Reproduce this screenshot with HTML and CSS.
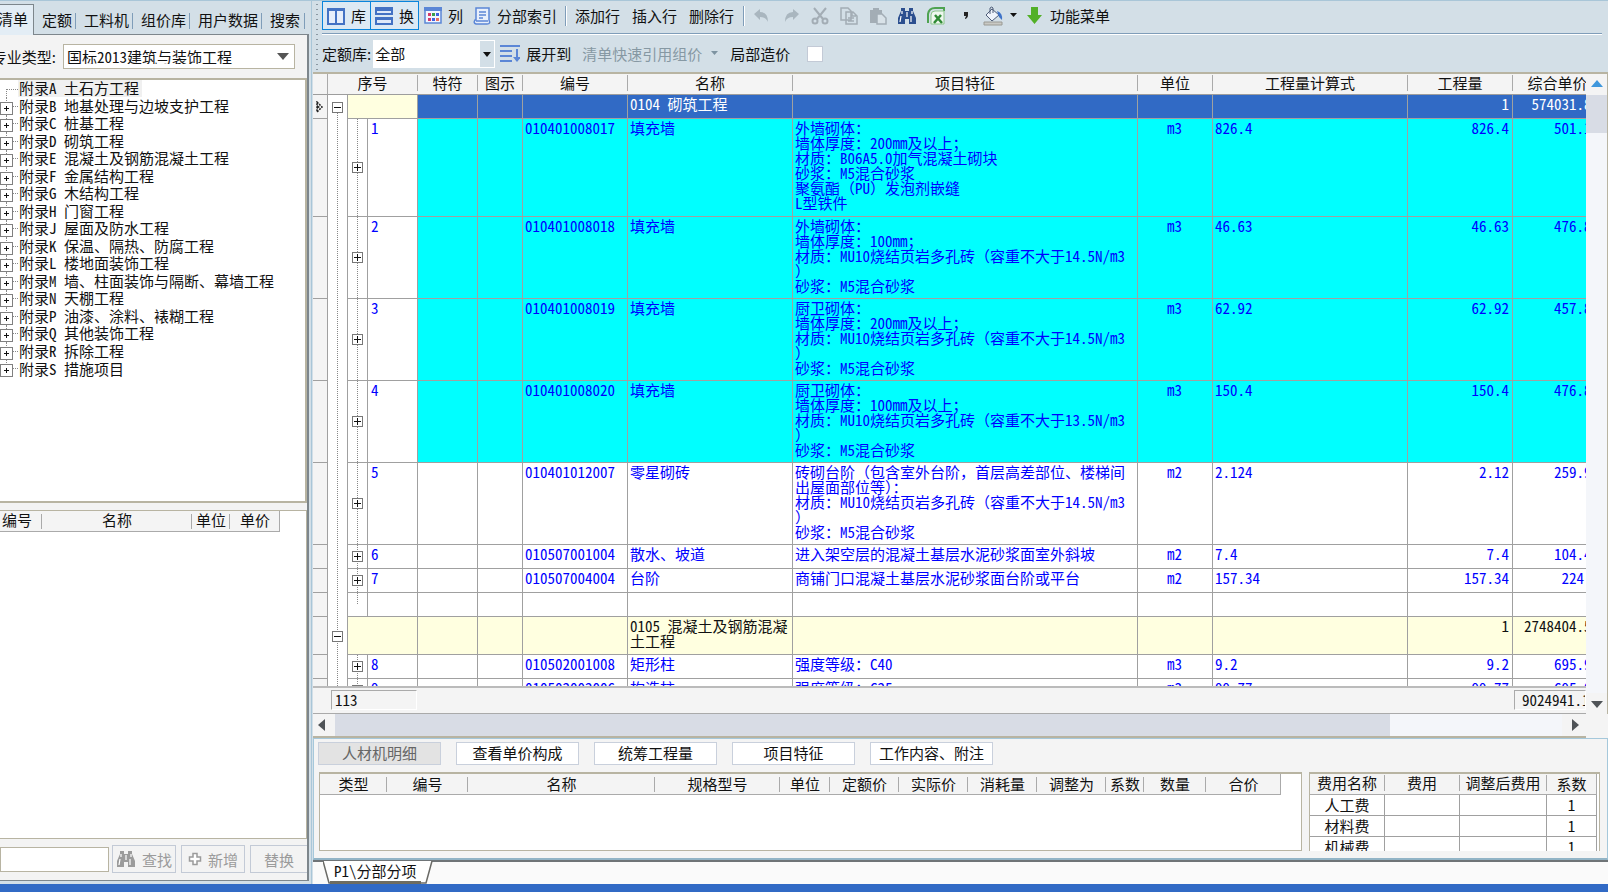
FILE: index.html
```html
<!DOCTYPE html>
<html lang="zh-CN">
<head>
<meta charset="utf-8">
<title>分部分项</title>
<link rel="stylesheet" href="styles.css">
</head>
<body>
<svg class="defs" aria-hidden="true">
  <symbol id="bino" viewBox="0 0 20 18"><path d="M4 1h4v3h4V1h4v3l3 7v6h-7v-5H8v5H1v-6l3-7z" fill="currentColor"/><path d="M5 4v3M15 4v3M4 9l-1 6M14 9v6M10 5v5" stroke="#fff" stroke-width="1.2" fill="none"/></symbol>
</svg>
<div class="app">
  <aside class="side">
    <nav class="tabs">
      <button class="tab on">清单</button><button class="tab">定额</button><button class="tab">工料机</button><button class="tab">组价库</button><button class="tab">用户数据</button><button class="tab">搜索</button>
    </nav>
    <div class="side-body">
      <div class="type">
        <label for="spec">专业类型:</label>
        <div class="pick"><select id="spec"><option>国标2013建筑与装饰工程</option></select></div>
      </div>
      <ul class="tree">
        <li class="leaf"><span class="sel">附录A 土石方工程</span></li>
        <li><span>附录B 地基处理与边坡支护工程</span></li>
        <li><span>附录C 桩基工程</span></li>
        <li><span>附录D 砌筑工程</span></li>
        <li><span>附录E 混凝土及钢筋混凝土工程</span></li>
        <li><span>附录F 金属结构工程</span></li>
        <li><span>附录G 木结构工程</span></li>
        <li><span>附录H 门窗工程</span></li>
        <li><span>附录J 屋面及防水工程</span></li>
        <li><span>附录K 保温、隔热、防腐工程</span></li>
        <li><span>附录L 楼地面装饰工程</span></li>
        <li><span>附录M 墙、柱面装饰与隔断、幕墙工程</span></li>
        <li><span>附录N 天棚工程</span></li>
        <li><span>附录P 油漆、涂料、裱糊工程</span></li>
        <li><span>附录Q 其他装饰工程</span></li>
        <li><span>附录R 拆除工程</span></li>
        <li><span>附录S 措施项目</span></li>
      </ul>
      <div class="list">
        <table class="head list-head"><tr><th class="w42">编号</th><th class="w150">名称</th><th class="w38">单位</th><th class="w50">单价</th></tr></table>
      </div>
      <div class="find">
        <input type="text" aria-label="查找内容">
        <button><svg width="20" height="18"><use href="#bino"/></svg>查找</button>
        <button><svg width="14" height="14" viewBox="0 0 14 14"><path d="M5 1.500h4v3.500h3.500v4H9v3.500H5V9H1.500V5H5z" fill="#fff" stroke="#9b9b9b" stroke-width="1.500"/></svg>新增</button>
        <button class="last">替换</button>
      </div>
    </div>
  </aside>

  <main class="main">
    <div class="bars">
      <div class="bar">
        <div class="pair">
          <button class="tog"><svg width="18" height="18" viewBox="0 0 18 18"><path d="M1 3h16v14H1zM9 3v14" fill="#e6eefb" stroke="#4472c4" stroke-width="2"/><path d="M0 1h18v3H0z" fill="#4472c4"/></svg>库</button><button class="tog"><svg width="18" height="18" viewBox="0 0 18 18"><path d="M1 1h16v6H1zM1 11h16v6H1z" fill="#dfe9f9" stroke="#4472c4" stroke-width="2"/><path d="M0 0h18v4H0zM0 10h18v3H0z" fill="#4472c4"/></svg>换</button>
        </div>
        <button class="tb"><svg width="18" height="18" viewBox="0 0 18 18"><path d="M1 1h16v15H1z" fill="#f2f6ff" stroke="#5b86d6" stroke-width="1.500"/><path d="M0 0h18v4H0z" fill="#5b86d6"/><path d="M4 6h3v3H4zM4 11h3v3H4z" fill="#d33a6c"/><path d="M8 6h3v3H8z" fill="#3a9d4a"/><path d="M12 6h3v3h-3zM8 11h3v3H8z" fill="#4060e0"/><path d="M12 11h3v3h-3z" fill="#e87060"/></svg>列</button>
        <button class="tb"><svg width="18" height="18" viewBox="0 0 18 18"><path d="M3 1h13v12q2 4-2 4H3q-3-1-1-4h1z" fill="#e8effb" stroke="#5b86d6" stroke-width="1.500"/><path d="M6 5h7M6 8h7M6 11h4M3 14h12" stroke="#5b86d6" stroke-width="1.500"/></svg>分部索引</button>
        <i class="sep"></i>
        <button class="tb txt">添加行</button><button class="tb txt">插入行</button><button class="tb txt">删除行</button>
        <i class="sep"></i>
        <button class="ic" aria-label="撤销"><svg width="18" height="18" viewBox="0 0 18 18"><path d="M1 7l6-5v3q8 0 8 10-2-5-8-5v3z" fill="#a9b6bf"/></svg></button>
        <button class="ic" aria-label="重做"><svg width="18" height="18" viewBox="0 0 18 18"><path d="M17 7l-6-5v3q-8 0-8 10 2-5 8-5v3z" fill="#a9b6bf"/></svg></button>
        <button class="ic" aria-label="剪切"><svg width="18" height="18" viewBox="0 0 18 18" fill="none" stroke="#a3adb5" stroke-width="2"><path d="M3 1l9 11M15 1L6 12"/><circle cx="4" cy="14" r="2.500"/><circle cx="14" cy="14" r="2.500"/></svg></button>
        <button class="ic" aria-label="复制"><svg width="18" height="18" viewBox="0 0 18 18" fill="#d3dfe7" stroke="#a3adb5" stroke-width="1.500"><path d="M1 1h7l3 3v9H1zM6 5h7l4 4v8H6zM12 5v4h4M8 11h6M8 14h6"/></svg></button>
        <button class="ic" aria-label="粘贴"><svg width="18" height="18" viewBox="0 0 18 18"><path d="M1 3h12v13H1zM4 1h6v3H4z" fill="#a3adb5"/><path d="M8 7h5l4 4v6H8z" fill="#d9e2e8" stroke="#a3adb5" stroke-width="1.500"/></svg></button>
        <button class="ic navy" aria-label="查找"><svg width="20" height="18"><use href="#bino"/></svg></button>
        <button class="ic" aria-label="导出表格"><svg width="18" height="18" viewBox="0 0 18 18"><path d="M1 16V7q1-6 7-6h9v3" fill="none" stroke="#4fa351" stroke-width="2"/><path d="M4 16V8q0-4 4-4h9v13H4z" fill="#eef7ee" stroke="#8cc58c"/><path d="M8 8l7 8M14 8l-7 8" stroke="#2f8a35" stroke-width="2.500"/></svg></button>
        <button class="ic" aria-label="千分位"><svg width="18" height="18" viewBox="0 0 18 18"><path d="M8 5h4v3q0 3-3 4v-1q1-1 1-2H8z" fill="#222"/></svg></button>
        <button class="ic fill" aria-label="填充颜色"><svg width="20" height="20" viewBox="0 0 20 20"><path d="M9 3l7 6-7 6-6-6z" fill="#eef3fb" stroke="#4f5d78"/><path d="M7 8V2q2-2 3 0v5" fill="none" stroke="#4f5d78"/><path d="M14 5q6 2 5 9l-3-3z" fill="#3f73c8"/><path d="M1 16h18v3H1z" fill="#c9c9c4" stroke="#9a9a94"/></svg><svg width="8" height="5" viewBox="0 0 8 5"><path d="M0 0h7L3.500 4z" fill="#111"/></svg></button>
        <button class="tb menu"><svg width="15" height="17" viewBox="0 0 15 17"><path d="M4 0h7v8h4l-7.500 9L0 8h4z" fill="#52b027"/></svg>功能菜单</button>
      </div>
      <div class="bar two">
        <label for="lib">定额库:</label>
        <div class="pick lib"><select id="lib"><option>全部</option></select></div>
        <button class="tb exp"><svg width="20" height="19" viewBox="0 0 20 19"><path d="M0 2h20M0 7h12M0 12h12M0 17h12M17 5v11" stroke="#5b86d6" stroke-width="2" fill="none"/><path d="M13 13l4 5 4-5z" fill="#5b86d6"/></svg>展开到</button>
        <button class="tb dim">清单快速引用组价<svg width="8" height="5" viewBox="0 0 8 5"><path d="M0 0h7L3.500 4z" fill="#7d93a1"/></svg></button>
        <label class="part" for="part">局部造价</label><input id="part" class="chk" type="checkbox">
      </div>
    </div>

    <section class="sheet">
      <div class="view">
        <div class="rows">
        <table class="grid">
          <colgroup><col class="c15"><col class="c20"><col class="c20"><col class="c50"><col class="c60"><col class="c45"><col class="c105"><col class="c165"><col><col class="c75"><col class="c195"><col class="c105"><col class="c90"></colgroup>
          <thead><tr><th></th><th colspan="3"><span>序号</span></th><th><span>特符</span></th><th><span>图示</span></th><th><span>编号</span></th><th><span>名称</span></th><th><span>项目特征</span></th><th><span>单位</span></th><th><span>工程量计算式</span></th><th><span>工程量</span></th><th><span>综合单价</span></th></tr></thead>
          <tbody>
          <tr class="h24 cur"><td class="ind"><svg width="8" height="12" viewBox="0 0 8 12"><path d="M1 1l5 5-5 5z" fill="#fff" stroke="#222" stroke-width="1.500" stroke-dasharray="2 1"/><path d="M1 4l3 2-3 2z" fill="#222"/></svg></td><td class="t root first"><button class="box minus" aria-label="折叠"></button></td><td colspan="2" class="cream"></td><td></td><td></td><td></td><td>0104 砌筑工程</td><td></td><td></td><td></td><td class="r">1</td><td class="r">574031.82</td></tr>
          <tr class="h98 cy"><td class="ind"></td><td class="t"></td><td class="t"><button class="box" aria-label="展开"></button></td><td class="no">1</td><td></td><td></td><td>010401008017</td><td>填充墙</td><td>外墙砌体：<br>墙体厚度：200mm及以上；<br>材质：B06A5.0加气混凝土砌块<br>砂浆：M5混合砂浆<br>聚氨酯（PU）发泡剂嵌缝<br>L型铁件</td><td class="c">m3</td><td>826.4</td><td class="r">826.4</td><td class="r">501.10</td></tr>
          <tr class="h82 cy"><td class="ind"></td><td class="t"></td><td class="t"><button class="box" aria-label="展开"></button></td><td class="no">2</td><td></td><td></td><td>010401008018</td><td>填充墙</td><td>外墙砌体：<br>墙体厚度：100mm；<br>材质：MU10烧结页岩多孔砖（容重不大于14.5N/m3<br>）<br>砂浆：M5混合砂浆</td><td class="c">m3</td><td>46.63</td><td class="r">46.63</td><td class="r">476.82</td></tr>
          <tr class="h82 cy"><td class="ind"></td><td class="t"></td><td class="t"><button class="box" aria-label="展开"></button></td><td class="no">3</td><td></td><td></td><td>010401008019</td><td>填充墙</td><td>厨卫砌体：<br>墙体厚度：200mm及以上；<br>材质：MU10烧结页岩多孔砖（容重不大于14.5N/m3<br>）<br>砂浆：M5混合砂浆</td><td class="c">m3</td><td>62.92</td><td class="r">62.92</td><td class="r">457.82</td></tr>
          <tr class="h82 cy"><td class="ind"></td><td class="t"></td><td class="t"><button class="box" aria-label="展开"></button></td><td class="no">4</td><td></td><td></td><td>010401008020</td><td>填充墙</td><td>厨卫砌体：<br>墙体厚度：100mm及以上；<br>材质：MU10烧结页岩多孔砖（容重不大于13.5N/m3<br>）<br>砂浆：M5混合砂浆</td><td class="c">m3</td><td>150.4</td><td class="r">150.4</td><td class="r">476.82</td></tr>
          <tr class="h82"><td class="ind"></td><td class="t"></td><td class="t"><button class="box" aria-label="展开"></button></td><td class="no">5</td><td></td><td></td><td>010401012007</td><td>零星砌砖</td><td>砖砌台阶（包含室外台阶，首层高差部位、楼梯间<br>出屋面部位等）：<br>材质：MU10烧结页岩多孔砖（容重不大于14.5N/m3<br>）<br>砂浆：M5混合砂浆</td><td class="c">m2</td><td>2.124</td><td class="r">2.12</td><td class="r">259.92</td></tr>
          <tr class="h24"><td class="ind"></td><td class="t"></td><td class="t"><button class="box" aria-label="展开"></button></td><td class="no">6</td><td></td><td></td><td>010507001004</td><td>散水、坡道</td><td>进入架空层的混凝土基层水泥砂浆面室外斜坡</td><td class="c">m2</td><td>7.4</td><td class="r">7.4</td><td class="r">104.42</td></tr>
          <tr class="h24"><td class="ind"></td><td class="t"></td><td class="t"><button class="box" aria-label="展开"></button></td><td class="no">7</td><td></td><td></td><td>010507004004</td><td>台阶</td><td>商铺门口混凝土基层水泥砂浆面台阶或平台</td><td class="c">m2</td><td>157.34</td><td class="r">157.34</td><td class="r">224.1</td></tr>
          <tr class="h24"><td class="ind"></td><td class="t"></td><td class="t end"></td><td></td><td></td><td></td><td></td><td></td><td></td><td></td><td></td><td></td><td></td></tr>
          <tr class="h38 sec"><td class="ind"></td><td class="t root"><button class="box minus" aria-label="折叠"></button></td><td colspan="2"></td><td></td><td></td><td></td><td>0105 混凝土及钢筋混凝土工程</td><td></td><td></td><td></td><td class="r">1</td><td class="r">2748404.52</td></tr>
          <tr class="h24"><td class="ind"></td><td class="t"></td><td class="t"><button class="box" aria-label="展开"></button></td><td class="no">8</td><td></td><td></td><td>010502001008</td><td>矩形柱</td><td>强度等级：C40</td><td class="c">m3</td><td>9.2</td><td class="r">9.2</td><td class="r">695.92</td></tr>
          <tr class="h24"><td class="ind"></td><td class="t"></td><td class="t"><button class="box" aria-label="展开"></button></td><td class="no">9</td><td></td><td></td><td>010502002006</td><td>构造柱</td><td>强度等级：C25</td><td class="c">m3</td><td>99.77</td><td class="r">99.77</td><td class="r">695.92</td></tr>
          </tbody>
        </table>
        </div>
        <div class="sum"><span class="count">113</span><span class="total">9024941.12</span></div>
      </div>
      <div class="vsb"><svg width="12" height="7" viewBox="0 0 12 7"><path d="M6 0l6 7H0z" fill="#3f97dc"/></svg><div class="vtrack"><div class="vthumb"></div></div><svg width="12" height="7" viewBox="0 0 12 7"><path d="M0 0h12L6 7z" fill="#4f5357"/></svg></div>
      <div class="hsb"><svg width="7" height="12" viewBox="0 0 7 12"><path d="M7 0v12L0 6z" fill="#4f5357"/></svg><div class="htrack"><div class="hthumb"></div></div><svg width="7" height="12" viewBox="0 0 7 12"><path d="M0 0v12l7-6z" fill="#4f5357"/></svg></div>
    </section>

    <section class="detail">
      <div class="btns"><button class="on">人材机明细</button><button>查看单价构成</button><button>统筹工程量</button><button>项目特征</button><button>工作内容、附注</button></div>
      <div class="panes">
        <div class="pane">
          <table class="head"><tr><th class="w67">类型</th><th class="w81">编号</th><th class="w187">名称</th><th class="w125">规格型号</th><th class="w50">单位</th><th class="w69">定额价</th><th class="w69">实际价</th><th class="w69">消耗量</th><th class="w69">调整为</th><th class="w38">系数</th><th class="w62">数量</th><th class="w75">合价</th></tr></table>
        </div>
        <div class="pane fees">
          <table class="fee"><thead><tr><th class="w75"><span>费用名称</span></th><th class="w75"><span>费用</span></th><th><span>调整后费用</span></th><th class="w50">系数</th></tr></thead>
          <tbody><tr><td>人工费</td><td></td><td></td><td>1</td></tr><tr><td>材料费</td><td></td><td></td><td>1</td></tr><tr><td>机械费</td><td></td><td></td><td>1</td></tr></tbody></table>
        </div>
      </div>
    </section>
    <div class="pages">
      <button class="page"><svg width="110" height="24" viewBox="0 0 110 24"><path d="M0 0L6 22H103L109 0" fill="#fff" stroke="#6a6a66" stroke-width="1.500"/><path d="M7 20h91v3H7z" fill="#6e6c60"/></svg><span>P1\分部分项</span></button>
    </div>
  </main>
  <footer class="foot"></footer>
</div>
</body>
</html>
```

FILE: styles.css
```css
* { box-sizing: border-box; }
body {
  margin: 0;
  font: 15px/15px "Noto Sans Mono CJK SC", "Noto Sans CJK SC", sans-serif;
  color: #111;
  background: #d3dfe7;
}
button, select, input { font: inherit; color: inherit; margin: 0; padding: 0; border: 0; border-radius: 0; background: none; white-space: nowrap; }
table { border-collapse: separate; border-spacing: 0; }
th { font-weight: normal; padding: 0; }
svg { display: block; flex: none; }
.defs { position: absolute; width: 0; height: 0; }

.app {
  height: 100vh;
  display: grid;
  grid-template: minmax(0, 1fr) 8px / 312px minmax(0, 1fr);
  border-top: 1px solid #a9c6d8;
  overflow: hidden;
}
.foot { grid-column: 1 / 3; background: #316ac5; }

/* left library panel */
.side { display: flex; flex-direction: column; padding: 0 2px 3px 0; border-right: 1px solid #a9c6d8; min-height: 0; }
.tabs { display: flex; height: 34px; padding-top: 3px; }
.tab { position: relative; flex: none; display: flex; align-items: center; padding: 0 4px 0 8px; border-bottom: 1px solid #7d868c; font-family: "Noto Sans CJK SC", sans-serif; }
.tab:not(.on)::after { content: ""; position: absolute; right: 0; top: 9px; height: 16px; border-right: 1px solid #7f9db9; }
.tab.on { width: 34px; padding: 0 5px 3px 0; justify-content: flex-end; overflow: hidden; background: #e3edf5; border: 1px solid #7d868c; border-width: 1px 1px 0 0; }
.tab:last-child { flex: 1; justify-content: flex-start; }
.tab:last-child::after { right: 4px; }
.side-body { flex: 1; min-height: 0; display: flex; flex-direction: column; background: #f3f3f3; border: 2px solid #7d868c; border-width: 0 2px 1px 0; padding-bottom: 7px; }
.type { display: flex; align-items: center; height: 43px; gap: 7px; padding-right: 12px; }
.type label { width: 56px; display: flex; justify-content: flex-end; overflow: hidden; white-space: nowrap; line-height: 20px; font-family: "Noto Sans CJK SC", sans-serif; }
.pick { flex: 1; position: relative; }
.pick select { width: 100%; height: 25px; padding: 0 0 1px 3px; appearance: none; background: #fff; border: 1px solid #b8b4a2; }
.pick::after { content: ""; position: absolute; right: 6px; top: 9px; border: 6px solid transparent; border-top: 7px solid #555; border-bottom: 0; pointer-events: none; }
.tree { flex: 425 0 0; margin: 0; padding: 0; list-style: none; background: #fff; border: 1px solid #b8b4a2; border-width: 2px 2px 2px 0; display: flex; flex-direction: column; }
.tree li { flex: 0 0 calc(298px / 17); display: flex; align-items: center; position: relative; padding-left: 18px; }
.tree li span { line-height: 16px; white-space: pre; padding: 0 3px 1px 1px; }
.tree .sel { background: #f0f0f0; }
.tree li::before { content: ""; position: absolute; left: 6px; right: auto; top: 0; bottom: 0; width: 11px; border-left: 1px dotted #888; background: linear-gradient(90deg, #888 50%, transparent 50%) 0 50% / 2px 1px repeat-x; }
.tree li.leaf::before { top: 50%; background-position: 0 0; }
.tree li:last-child::before { bottom: 50%; background-position: 0 100%; }
.tree li:not(.leaf)::after { content: ""; position: absolute; left: 0; top: 4px; width: 11px; height: 11px; border: 1px solid #808080; background: linear-gradient(#111, #111) 50% / 5px 1px no-repeat, linear-gradient(#111, #111) 50% / 1px 5px no-repeat, #fff; }
.list { flex: 331 0 0; margin: 7px 0 6px 0; background: #fff; border: 1px solid #b8b4a2; border-left: 0; }
.head { table-layout: fixed; width: 0; background: #f4f4f4; }
.head th { height: 21px; padding-bottom: 2px; border-bottom: 1px solid #aaa; position: relative; white-space: nowrap; }
.head th::after { content: ""; position: absolute; right: 0; top: 3px; bottom: 2px; border-right: 1px solid #aaa; }
.head th:last-child::after { top: 0; bottom: 0; }
.list-head th:first-child { padding-right: 8px; }
.find { display: flex; align-items: center; gap: 5px; }
.find input { width: 109px; flex: none; height: 25px; background: #fff; border: 1px solid #b8b4a2; margin-right: -2px; }
.find button { width: 64px; height: 28px; border: 1px solid #c3cad6; display: flex; align-items: center; justify-content: center; gap: 6px; color: #9b9b9b; }
.find .last { flex: 1; border-right: 0; }

/* toolbars */
.main { display: flex; flex-direction: column; min-width: 0; min-height: 0; padding-left: 1px; }
.bars { height: 71px; flex: none; padding-left: 9px; background: radial-gradient(circle, #8b98a2 1px, transparent 1px) 2px 6px / 4px 5px repeat-y; font-family: "Noto Sans CJK SC", sans-serif; }
.bar { display: flex; align-items: center; height: 33px; padding-bottom: 3px; border-bottom: 1px solid #7f9db9; box-shadow: 0 1px #fff; margin-right: 6px; }
.bar.two { height: 37px; margin-top: 1px; padding: 0; border: 0; box-shadow: none; }
.pair { display: flex; }
.tog { width: 49px; height: 29px; border: 1px solid #0a84dc; display: flex; align-items: center; justify-content: center; gap: 6px; background: #dce9f4; }
.tog + .tog { margin-left: -1px; }
.tb { display: flex; align-items: center; gap: 6px; margin-left: 5px; }
.tb + .tb { margin-left: 10px; }
.txt, .txt + .txt { margin: 0 12px 0 0; }
.sep { width: 2px; height: 20px; border-left: 1px solid #7f9db9; border-right: 1px solid #fff; margin: 0 8px; }
.txt + .sep { margin: 0 8px 0 -3px; }
.ic { width: 29px; display: flex; flex: none; align-items: center; color: #888; }
.navy { width: 30px; margin-left: -1px; color: #2c4f8f; }
.fill { width: 43px; margin-left: -2px; gap: 7px; }
.menu { margin-left: 1px; gap: 8px; }
.lib { flex: 0 0 122px; margin-left: 2px; }
.lib select { height: 28px; padding: 0 0 1px 1px; border: 1px solid #fff; background: linear-gradient(90deg, transparent 106px, #d3dfe7 106px), #fff; }
.lib::after { right: 4px; top: 12px; border-width: 4px; border-top: 5px solid #111; }
.tb.dim { color: #8698a3; gap: 9px; margin-left: 11px; }
.part { margin-left: 11px; }
.chk { appearance: none; width: 16px; height: 16px; background: #fff; border: 1px solid #c3cad6; margin-left: 17px; }

/* bill grid */
.sheet { flex: 1; min-height: 0; display: grid; grid-template: minmax(0, 1fr) 24px / minmax(0, 1fr) 22px; border-top: 2px solid #b8b4a2; background: #f4f4f4; }
.view { display: flex; flex-direction: column; min-height: 0; overflow: hidden; border-bottom: 1px solid #aaa; }
.rows { flex: 1; min-height: 0; overflow: hidden; background: #fff; border-bottom: 2px solid #bbb; }
.grid { table-layout: fixed; width: calc(100% + 17px); }
.grid th { height: 21px; padding-bottom: 2px; background: #f4f4f4; border-bottom: 1px solid #9d9d9d; }
.grid th:first-child { border-right: 1px solid #aaa; }
.grid th span, .fee th span { display: block; line-height: 16px; border-right: 1px solid #aaa; white-space: nowrap; }
.grid td { padding: 1px 3px 0 2px; vertical-align: top; border: 1px solid #a0a0a0; border-width: 0 1px 1px 0; color: #00f; overflow: hidden; }
.grid .ind { background: #f4f4f4; }
.grid td.ind { vertical-align: middle; padding: 0 0 0 3px; }
.h24 { height: 24px; }
.h38 { height: 38px; }
.h82 { height: 82px; }
.h98 { height: 98px; }
.cur td { background: #316ac5; color: #fff; }
.cur .cream, .sec td { background: #ffffe0; color: #111; }
.cy td { background: #0ff; }
.grid .t, .cy .t, .cy .no { background-color: #fff; }
.grid .t { padding: 0; vertical-align: middle; border-bottom: 0; background-image: repeating-linear-gradient(#888 0 1px, transparent 1px 2px); background-size: 1px 100%; background-position: 9px 0; background-repeat: no-repeat; }
.grid .no { padding-left: 3px; }
.grid .t + .t { border-bottom: 1px solid #a0a0a0; }
.grid .first { background-size: 1px 50%; background-position: 9px 100%; }
.grid .end { background-size: 1px 50%; }
.box { display: block; width: 11px; height: 11px; margin-left: 4px; border: 1px solid #777; background: linear-gradient(#111, #111) 50% / 7px 1px no-repeat, linear-gradient(#111, #111) 50% / 1px 7px no-repeat, #fff; }
.minus { background: linear-gradient(#111, #111) 50% / 7px 1px no-repeat, #fff; }
.grid .r { text-align: right; }
.grid .c { text-align: center; }
.c15 { width: 15px; } .c20 { width: 20px; } .c45 { width: 45px; } .c50 { width: 50px; } .c60 { width: 60px; }
.c75 { width: 75px; } .c90 { width: 90px; } .c105 { width: 105px; } .c165 { width: 165px; } .c195 { width: 195px; }
.sum { height: 25px; flex: none; display: flex; justify-content: space-between; padding: 2px 0 3px 18px; }
.count, .total { border: 1px solid #aaa; border-color: #aaa #fff #fff #aaa; line-height: 18px; padding-left: 3px; }
.count { width: 86px; }
.total { width: 72px; padding-left: 7px; overflow: hidden; }
.vsb { display: flex; flex-direction: column; align-items: center; justify-content: space-between; padding: 6px 0 6px; border-right: 1px solid #b8b4a2; gap: 8px; }
.vtrack { flex: 1; align-self: stretch; background: #f4f6fa; }
.vthumb { height: 38px; background: #d8dce5; }
.hsb { display: flex; align-items: center; gap: 10px; padding: 0 7px 0 5px; border-bottom: 2px solid #b8b4a2; }
.htrack { flex: 1; height: 22px; background: #f4f6fa; }
.hthumb { width: 86%; height: 22px; background: #d8dce5; }

/* detail panel */
.detail { flex: none; height: 122px; display: flex; flex-direction: column; gap: 7px; padding: 3px 7px 7px 4px; background: #f4f4f4; border: 1px solid #a5c8db; border-bottom: 2px solid #92b4c6; }
.btns { display: flex; gap: 15px; }
.btns button { width: 123px; height: 23px; padding-bottom: 2px; background: #fff; border: 1px solid #c9d0dc; }
.btns .on { background: #e3e3e3; color: #666; }
.panes { flex: 1; min-height: 0; display: flex; gap: 7px; padding-left: 1px; }
.pane { flex: 1; min-width: 0; background: #fff; border: 1px solid #b8b4a2; border-top-width: 2px; overflow: hidden; }
.fees { flex: 0 0 291px; border-bottom: 0; padding-right: 2px; }
.fee { table-layout: fixed; width: 100%; }
.fee th { height: 21px; padding-bottom: 2px; background: #f4f4f4; border-bottom: 1px solid #aaa; }
.fee td { height: 21px; padding: 0 0 2px; text-align: center; border: 1px solid #a0a0a0; border-width: 0 1px 1px 0; }
.fee th:last-child { border-right: 1px solid #aaa; }
.w38 { width: 38px; } .w42 { width: 42px; } .w50 { width: 50px; } .w62 { width: 62px; } .w67 { width: 67px; } .w69 { width: 69px; }
.w75 { width: 75px; } .w81 { width: 81px; } .w125 { width: 125px; } .w150 { width: 150px; } .w187 { width: 187px; }

/* page tabs */
.pages { flex: none; height: 24px; background: #fafafa; border-top: 2px solid #6f7477; padding-left: 10px; }
.page { display: grid; height: 22px; margin-top: -1px; }
.page svg, .page span { grid-area: 1 / 1; }
.page span { padding: 2px 0 0 11px; text-align: left; z-index: 1; }
```
